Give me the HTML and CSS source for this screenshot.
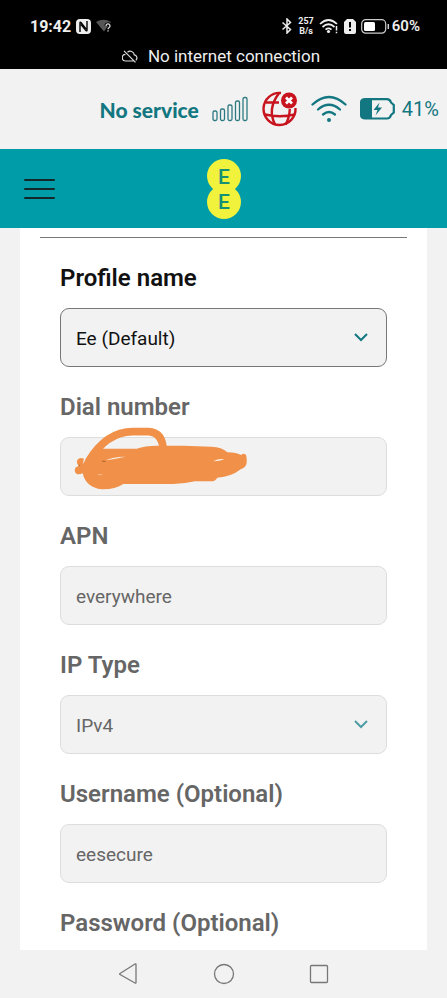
FILE: index.html
```html
<!DOCTYPE html>
<html lang="en">
<head>
<meta charset="utf-8">
<meta name="viewport" content="width=device-width, initial-scale=1">
<title>APN profile</title>
<link rel="stylesheet" href="styles.css">
</head>
<body>
<div class="system">
  <div class="system-row">
    <div class="system-group">
      <span class="clock">19:42</span>
      <svg width="15" height="15" viewBox="0 0 15 15" aria-label="NFC"><rect width="15" height="15" rx="4" fill="#eee"/><path d="M4 13V4q0-1.500 1-.500l5 6.500M11 2v9q0 1.500-1 .500L5 5.500" fill="none" stroke="#000" stroke-width="1.400"/></svg>
      <svg width="16" height="14" viewBox="0 0 16 14" aria-hidden="true"><path d="M0 3Q7.500-1.500 15 3L8 12.500z" fill="#555"/><path d="M10 7a2 2 0 1 1 3 1.600q-1 .500-1 1.600M12 11.300v1.300" fill="none" stroke="#000" stroke-width="3"/><path d="M10 7a2 2 0 1 1 3 1.600q-1 .500-1 1.600M12 11.300v1.300" fill="none" stroke="#ddd" stroke-width="1.300"/></svg>
    </div>
    <div class="system-group">
      <svg width="12" height="16" viewBox="0 0 12 16" aria-label="Bluetooth"><path d="M1.500 4.500l8 7L6 15V1l3.500 3.500-8 7" fill="none" stroke="#eee" stroke-width="1.500"/></svg>
      <span class="speed"><span>257</span><span>B/s</span></span>
      <svg width="20" height="16" viewBox="0 0 20 16" aria-label="Wi-Fi"><g fill="none" stroke="#eee" stroke-width="1.700"><path d="M1 6Q9.500-2 18 6"/><path d="M3.500 9q6-5.500 12 0"/><path d="M6.500 11.700q3-2.500 6 0"/></g><circle cx="9.500" cy="13.500" r="1.600" fill="#eee"/><path d="M17.500 8v4.500m0 1.300v1.500" stroke="#eee" stroke-width="1.500"/></svg>
      <svg width="12" height="15" viewBox="0 0 12 15" aria-label="SIM alert"><path d="M3 0h6l3 3v10q0 2-2 2H2q-2 0-2-2V3z" fill="#eee"/><path d="M6 3v5.500m0 1.500v2" stroke="#000" stroke-width="2"/></svg>
      <svg class="battery" width="29" height="15" viewBox="0 0 29 15" aria-label="Battery"><rect x=".7" y=".7" width="24" height="13.500" rx="4" fill="none" stroke="#ccc" stroke-width="1.200"/><rect x="3" y="3" width="11" height="9" rx="1.500" fill="#fff"/><path d="M27.300 5v5" stroke="#ccc" stroke-width="1.500"/></svg>
      <span class="percent">60%</span>
    </div>
  </div>
  <div class="notice">
    <svg width="16" height="13" viewBox="0 0 16 13" aria-hidden="true"><g fill="none" stroke="#ddd" stroke-width="1.200"><path d="M5.500 2.200a4.200 4.200 0 0 1 6.800 2.700 3 3 0 0 1 1.500 5.300M3.500 4.300a3.300 3.300 0 0 0 .3 6.700h7.700M2 .8l11.500 11.500"/></g></svg>
    <span>No internet connection</span>
  </div>
</div>

<div class="device">
  <span class="service">No service</span>
  <svg class="bars" width="37" height="26" viewBox="0 0 37 26" aria-label="Signal"><g fill="none" stroke="#2c7a80" stroke-width="1.300"><rect x="1" y="15" width="4" height="9.500" rx="1.500"/><rect x="8.500" y="13" width="4" height="11.500" rx="1.500"/><rect x="16" y="9" width="4" height="15.500" rx="1.500"/><rect x="23.500" y="5" width="4" height="19.500" rx="1.500"/><rect x="31" y="1.500" width="4" height="23" rx="1.500"/></g></svg>
  <svg class="globe" width="36" height="36" viewBox="0 0 36 36" aria-label="Offline"><g fill="none" stroke="#c8141e" stroke-width="2.400"><path d="M19 2A16 16 0 1 0 33.500 17"/><path d="M17 2.300Q5 18 13 33.500M23.500 33.500Q27.500 27 27.800 18M4 11.500h13M2.800 23.500Q18 27 33 23.500"/></g><circle cx="27" cy="9.500" r="8" fill="#c8141e"/><path d="M24 6.500l6 6m0-6l-6 6" stroke="#fff" stroke-width="2.800"/></svg>
  <svg class="wifi" width="36" height="28" viewBox="0 0 36 28" aria-label="Wi-Fi"><g fill="none" stroke="#127780" stroke-width="2.300" stroke-linecap="round"><path d="M1.500 9.500q16.500-15 33 0"/><path d="M7 14.500q11-9.500 22 0"/><path d="M12 19.500q6-5 12 0"/></g><circle cx="18" cy="25" r="2" fill="#127780"/></svg>
  <svg width="36" height="22" viewBox="0 0 36 22" aria-label="Charging"><path d="M5 1.200h22q3 0 4 3.300l2.800 2.500v7.500L31 17q-1 3.500-4 3.500H5q-4 0-4-4V5.200q0-4 4-4z" fill="none" stroke="#127780" stroke-width="2.200"/><path d="M12 1H5Q1 1 1 5v11.500q0 4 4 4h7z" fill="#127780"/><path d="M19.500 4.500l-6 7.500h4l-2 5.500 6.500-8h-4z" fill="#127780"/></svg>
  <span class="charge">41%</span>
</div>

<header class="brand">
  <button class="menu" type="button" aria-label="Menu"><span></span><span></span><span></span></button>
  <a class="logo" href="#" aria-label="EE">
    <svg width="34" height="60" viewBox="0 0 34 60"><circle cx="17" cy="17" r="17" fill="#f0f23c"/><circle cx="17" cy="43" r="17" fill="#f0f23c"/><g class="logo-text"><text x="17" y="25">E</text><text x="17" y="50">E</text></g></svg>
  </a>
</header>

<main>
  <form class="card">
    <hr>
    <div class="field active">
      <label for="profile">Profile name</label>
      <div class="control">
        <select id="profile"><option>Ee (Default)</option></select>
        <svg class="chevron" width="14" height="9" viewBox="0 0 14 9"><path d="M1 1l6 6 6-6"/></svg>
      </div>
    </div>
    <div class="field">
      <label for="dial">Dial number</label>
      <div class="control">
        <input id="dial" type="text" disabled>
        <svg class="scribble" width="180" height="66" viewBox="90 120 540 198" aria-hidden="true">
          <path d="M128 238Q155 190 190 191H290Q315 182 350 182H430L515 185Q545 186 562 202Q590 203 604 210Q609 204 616 208Q621 211 620 235Q617 248 602 253Q575 275 532 278Q526 290 510 289H465Q430 297 400 297H250Q225 314 185 313Q138 308 128 265Q118 269 110 267Q101 260 106 248L116 242Q108 234 112 225Q118 215 132 221z" fill="#f19149"/>
          <path d="M145 230Q200 139 280 140H325Q371 142 370 205" fill="none" stroke="#f19149" stroke-width="23"/>
          <path d="M196 226Q224 214 256 215Q226 222 196 226zM520 229Q535 220 553 223Q540 229 520 229z" fill="#f7eee5"/>
          <path d="M186 229h11M117 239l3 5" stroke="#8a542a" stroke-width="2"/><path d="M174 269h13" stroke="#f8cda9" stroke-width="2"/>
        </svg>
      </div>
    </div>
    <div class="field">
      <label for="apn">APN</label>
      <div class="control"><input id="apn" type="text" value="everywhere" disabled></div>
    </div>
    <div class="field">
      <label for="ip">IP Type</label>
      <div class="control">
        <select id="ip" disabled><option>IPv4</option></select>
        <svg class="chevron" width="14" height="9" viewBox="0 0 14 9"><path d="M1 1l6 6 6-6"/></svg>
      </div>
    </div>
    <div class="field">
      <label for="user">Username (Optional)</label>
      <div class="control"><input id="user" type="text" value="eesecure" disabled></div>
    </div>
    <div class="field">
      <span class="label">Password (Optional)</span>
    </div>
  </form>
</main>

<nav class="keys">
  <button type="button" aria-label="Back"><svg width="22" height="22" viewBox="0 0 22 22"><path d="M18 1.500v18q0 1-1 .5L2 11.500q-1-.5 0-1L17 1q1-.5 1 .5z"/></svg></button>
  <button type="button" aria-label="Home"><svg width="22" height="22" viewBox="0 0 22 22"><circle cx="11" cy="11" r="9.500"/></svg></button>
  <button type="button" aria-label="Recents"><svg width="22" height="22" viewBox="0 0 22 22"><rect x="2.500" y="2.500" width="17" height="17" rx="1"/></svg></button>
</nav>
</body>
</html>
```
FILE: styles.css
```css
* { box-sizing: border-box; }

body {
  margin: 0;
  min-height: 100vh;
  display: flex;
  flex-direction: column;
  background: #f2f2f2;
  font-family: Roboto, sans-serif;
  color: #111;
}

svg { display: block; flex: none; }

button {
  border: 0;
  padding: 0;
  background: none;
}

.system {
  padding: 16px 27px 3px 30px;
  background: #000;
  color: #eee;
}

.system-row {
  display: flex;
  justify-content: space-between;
  height: 20px;
}

.system-group {
  display: flex;
  align-items: center;
  gap: 5px;
}

.clock { font-size: 16px; font-weight: 700; }

.speed {
  display: grid;
  font-size: 9px;
  font-weight: 700;
  line-height: 10px;
  text-align: center;
}

.percent { font-size: 15px; font-weight: 600; }
.battery { margin-right: -3px; }

.notice {
  display: flex;
  justify-content: center;
  align-items: center;
  gap: 10px;
  margin: 10px 8px 0 0;
  font-size: 17px;
  line-height: 20px;
}

.device {
  display: flex;
  align-items: center;
  justify-content: flex-end;
  gap: 13px;
  height: 80px;
  padding-right: 8px;
  color: #127780;
}

.service { font-family: Lato, sans-serif; font-size: 21px; font-weight: 900; }
.charge { font-size: 20px; margin-left: -7px; }

.brand {
  display: grid;
  grid-template-columns: 1fr auto 1fr;
  align-items: center;
  height: 79px;
  padding: 0 24px;
  background: #009ca8;
}

.menu {
  display: grid;
  gap: 7px;
  width: 31px;
}

.menu span {
  height: 2px;
  border-radius: 1px;
  background: #12282b;
}

.logo-text {
  font: 500 21px Roboto, sans-serif;
  fill: #168f77;
  text-anchor: middle;
}

main { flex: 1; padding: 0 20px; display: flex; }

.card {
  flex: 1;
  min-width: 0;
  padding: 9px 40px 0;
  background: #fff;
}

hr {
  height: 1px;
  margin: 0 -20px;
  border: 0;
  background: #777;
}

.field { margin-top: 26px; }

label, .label {
  display: block;
  margin-bottom: 16px;
  font-size: 24px;
  line-height: 28px;
  font-weight: 600;
  color: #666;
}

.field:last-child .label { margin-bottom: 13px; }

.control { position: relative; }

input, select {
  display: block;
  width: 100%;
  height: 59px;
  padding: 2px 15px 0;
  border: 1px solid #dcdede;
  border-radius: 9px;
  background: #f2f2f2;
  font: 19px Roboto, sans-serif;
  color: #666;
  opacity: 1;
  appearance: none;
}

.active label, .active select { color: #111; }
.active select { border-color: #777; }

.chevron {
  position: absolute;
  right: 19px;
  top: 25px;
  fill: none;
  stroke: #4f9ca5;
  stroke-width: 2;
  pointer-events: none;
}

.active .chevron { stroke: #127780; }

.scribble {
  position: absolute;
  left: 10px;
  top: -12px;
}

.keys {
  display: flex;
  justify-content: center;
  gap: 73px;
  height: 48px;
}

.keys svg { fill: none; stroke: #777; stroke-width: 1.3; }
```
